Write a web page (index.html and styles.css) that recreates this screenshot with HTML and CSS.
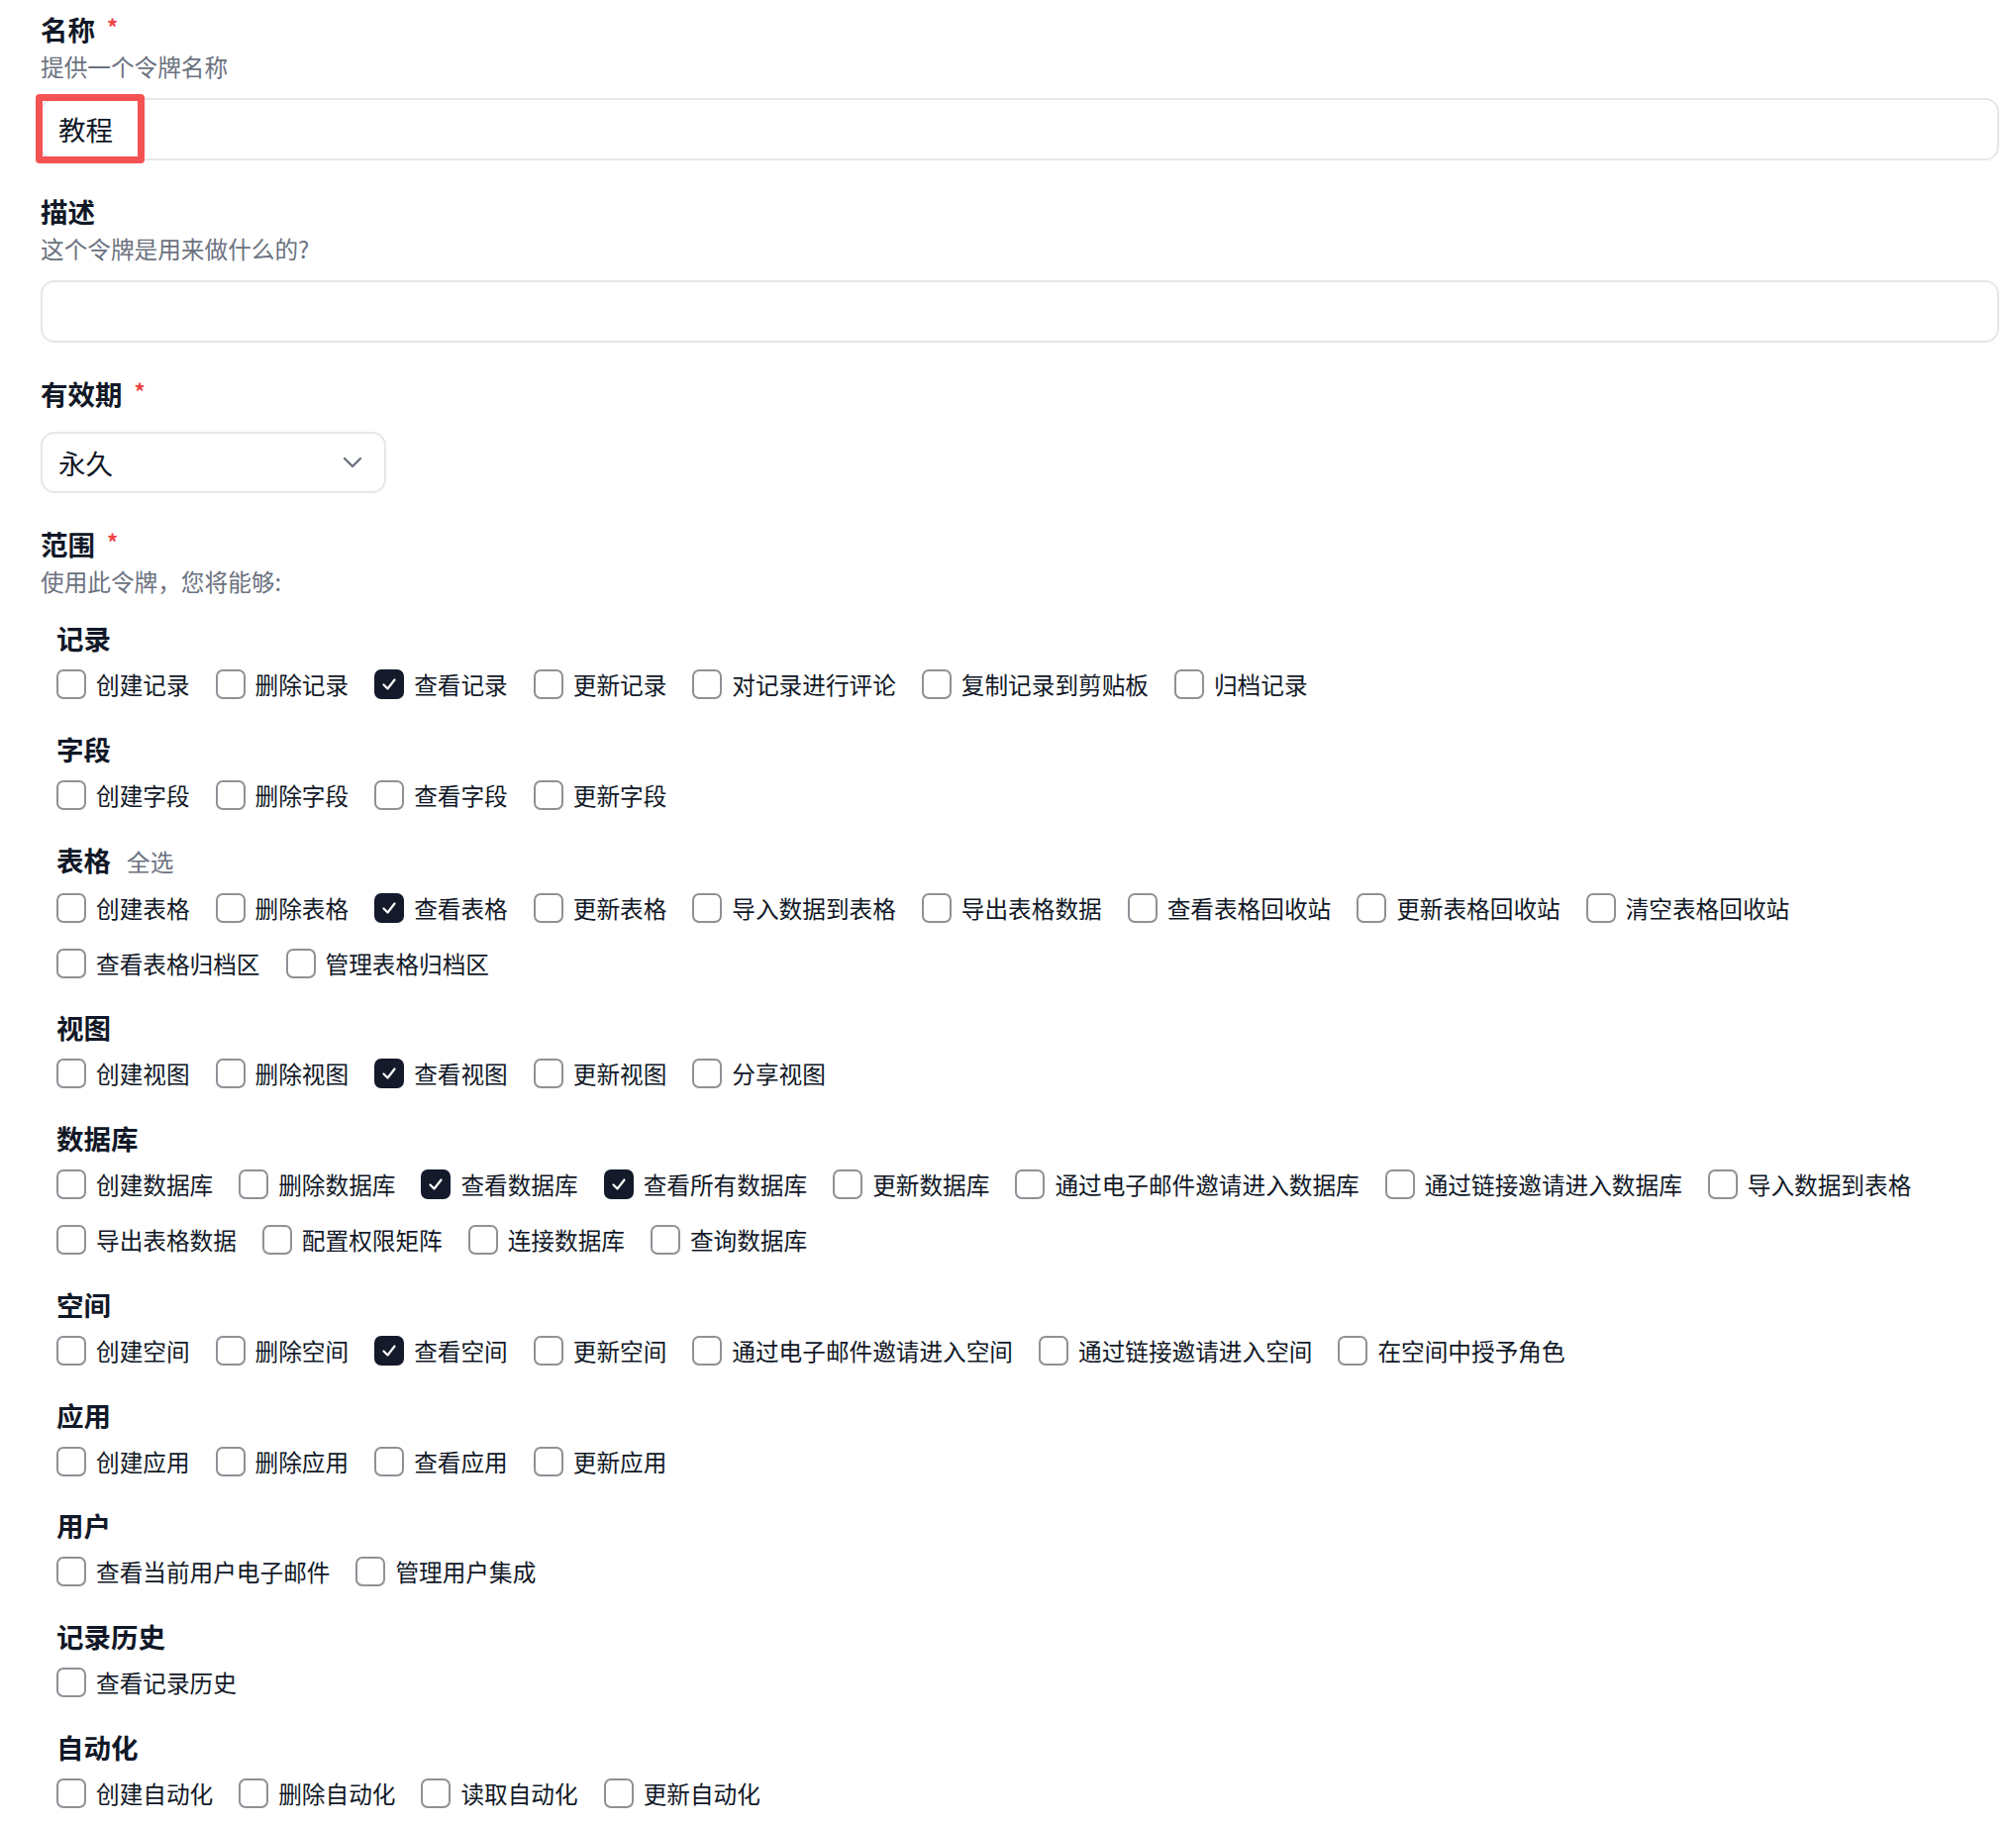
FILE: index.html
```html
<!DOCTYPE html>
<html lang="zh-CN">
<head>
<meta charset="utf-8">
<title>令牌</title>
<link rel="stylesheet" href="styles.css">
</head>
<body>
<div class="form">
  <div class="field">
    <div class="label">名称<span class="req">*</span></div>
    <div class="sub">提供一个令牌名称</div>
    <div class="input-wrap">
      <div class="input">教程</div>
      <div class="highlight"></div>
    </div>
  </div>

  <div class="field">
    <div class="label">描述</div>
    <div class="sub">这个令牌是用来做什么的?</div>
    <div class="input-wrap">
      <div class="input"></div>
    </div>
  </div>

  <div class="field">
    <div class="label">有效期<span class="req">*</span></div>
    <div class="select">
      <span>永久</span>
      <svg class="chev" width="20" height="12" viewBox="0 0 20 12"><polyline points="2,2 10,10 18,2" fill="none" stroke="#6b7280" stroke-width="2.4" stroke-linecap="round" stroke-linejoin="round"/></svg>
    </div>
  </div>

  <div class="field scopes">
    <div class="label">范围<span class="req">*</span></div>
    <div class="sub">使用此令牌，您将能够:</div>

    <div class="group">
      <div class="glabel">记录</div>
      <div class="row">
        <span class="item"><span class="cb"></span>创建记录</span>
        <span class="item"><span class="cb"></span>删除记录</span>
        <span class="item"><span class="cb on"><svg viewBox="0 0 30 30"><polyline points="9.5,15.5 13.5,19.5 20.5,10.5"/></svg></span>查看记录</span>
        <span class="item"><span class="cb"></span>更新记录</span>
        <span class="item"><span class="cb"></span>对记录进行评论</span>
        <span class="item"><span class="cb"></span>复制记录到剪贴板</span>
        <span class="item"><span class="cb"></span>归档记录</span>
      </div>
    </div>

    <div class="group">
      <div class="glabel">字段</div>
      <div class="row">
        <span class="item"><span class="cb"></span>创建字段</span>
        <span class="item"><span class="cb"></span>删除字段</span>
        <span class="item"><span class="cb"></span>查看字段</span>
        <span class="item"><span class="cb"></span>更新字段</span>
      </div>
    </div>

    <div class="group">
      <div class="glabel">表格<span class="all">全选</span></div>
      <div class="row">
        <span class="item"><span class="cb"></span>创建表格</span>
        <span class="item"><span class="cb"></span>删除表格</span>
        <span class="item"><span class="cb on"><svg viewBox="0 0 30 30"><polyline points="9.5,15.5 13.5,19.5 20.5,10.5"/></svg></span>查看表格</span>
        <span class="item"><span class="cb"></span>更新表格</span>
        <span class="item"><span class="cb"></span>导入数据到表格</span>
        <span class="item"><span class="cb"></span>导出表格数据</span>
        <span class="item"><span class="cb"></span>查看表格回收站</span>
        <span class="item"><span class="cb"></span>更新表格回收站</span>
        <span class="item"><span class="cb"></span>清空表格回收站</span>
        <span class="item"><span class="cb"></span>查看表格归档区</span>
        <span class="item"><span class="cb"></span>管理表格归档区</span>
      </div>
    </div>

    <div class="group">
      <div class="glabel">视图</div>
      <div class="row">
        <span class="item"><span class="cb"></span>创建视图</span>
        <span class="item"><span class="cb"></span>删除视图</span>
        <span class="item"><span class="cb on"><svg viewBox="0 0 30 30"><polyline points="9.5,15.5 13.5,19.5 20.5,10.5"/></svg></span>查看视图</span>
        <span class="item"><span class="cb"></span>更新视图</span>
        <span class="item"><span class="cb"></span>分享视图</span>
      </div>
    </div>

    <div class="group">
      <div class="glabel">数据库</div>
      <div class="row">
        <span class="item"><span class="cb"></span>创建数据库</span>
        <span class="item"><span class="cb"></span>删除数据库</span>
        <span class="item"><span class="cb on"><svg viewBox="0 0 30 30"><polyline points="9.5,15.5 13.5,19.5 20.5,10.5"/></svg></span>查看数据库</span>
        <span class="item"><span class="cb on"><svg viewBox="0 0 30 30"><polyline points="9.5,15.5 13.5,19.5 20.5,10.5"/></svg></span>查看所有数据库</span>
        <span class="item"><span class="cb"></span>更新数据库</span>
        <span class="item"><span class="cb"></span>通过电子邮件邀请进入数据库</span>
        <span class="item"><span class="cb"></span>通过链接邀请进入数据库</span>
        <span class="item"><span class="cb"></span>导入数据到表格</span>
        <span class="item"><span class="cb"></span>导出表格数据</span>
        <span class="item"><span class="cb"></span>配置权限矩阵</span>
        <span class="item"><span class="cb"></span>连接数据库</span>
        <span class="item"><span class="cb"></span>查询数据库</span>
      </div>
    </div>

    <div class="group">
      <div class="glabel">空间</div>
      <div class="row">
        <span class="item"><span class="cb"></span>创建空间</span>
        <span class="item"><span class="cb"></span>删除空间</span>
        <span class="item"><span class="cb on"><svg viewBox="0 0 30 30"><polyline points="9.5,15.5 13.5,19.5 20.5,10.5"/></svg></span>查看空间</span>
        <span class="item"><span class="cb"></span>更新空间</span>
        <span class="item"><span class="cb"></span>通过电子邮件邀请进入空间</span>
        <span class="item"><span class="cb"></span>通过链接邀请进入空间</span>
        <span class="item"><span class="cb"></span>在空间中授予角色</span>
      </div>
    </div>

    <div class="group">
      <div class="glabel">应用</div>
      <div class="row">
        <span class="item"><span class="cb"></span>创建应用</span>
        <span class="item"><span class="cb"></span>删除应用</span>
        <span class="item"><span class="cb"></span>查看应用</span>
        <span class="item"><span class="cb"></span>更新应用</span>
      </div>
    </div>

    <div class="group">
      <div class="glabel">用户</div>
      <div class="row">
        <span class="item"><span class="cb"></span>查看当前用户电子邮件</span>
        <span class="item"><span class="cb"></span>管理用户集成</span>
      </div>
    </div>

    <div class="group">
      <div class="glabel">记录历史</div>
      <div class="row">
        <span class="item"><span class="cb"></span>查看记录历史</span>
      </div>
    </div>

    <div class="group">
      <div class="glabel">自动化</div>
      <div class="row">
        <span class="item"><span class="cb"></span>创建自动化</span>
        <span class="item"><span class="cb"></span>删除自动化</span>
        <span class="item"><span class="cb"></span>读取自动化</span>
        <span class="item"><span class="cb"></span>更新自动化</span>
      </div>
    </div>
  </div>
</div>
</body>
</html>
```

FILE: styles.css
```css
html, body {
  margin: 0;
  padding: 0;
  background: #ffffff;
}

body {
  font-family: "Noto Sans CJK SC", "Noto Sans", "Liberation Sans", sans-serif;
  color: #111827;
}

.form {
  padding: 9px 17px 0 41px;
}

.field {
  margin-bottom: 31px;
}

.label {
  font-size: 27.5px;
  line-height: 40px;
  font-weight: 700;
  color: #111827;
}

.req {
  color: #ef4444;
  font-size: 22px;
  font-weight: 700;
  margin-left: 12px;
  vertical-align: top;
  line-height: 34px;
}

.sub {
  font-size: 23.65px;
  line-height: 37px;
  color: #6b7280;
}

.input-wrap {
  position: relative;
  margin-top: 13px;
}

.input {
  box-sizing: border-box;
  height: 63px;
  border: 2px solid #e5e7eb;
  border-radius: 14px;
  padding: 0 16px;
  font-size: 27.5px;
  line-height: 59px;
  color: #111827;
}

.highlight {
  position: absolute;
  left: -5px;
  top: -4px;
  width: 110px;
  height: 70px;
  box-sizing: border-box;
  border: 7px solid #f55353;
  border-radius: 4px;
}

.select {
  box-sizing: border-box;
  margin-top: 19px;
  width: 349px;
  height: 62px;
  border: 2px solid #e5e7eb;
  border-radius: 14px;
  padding: 0 22px 0 16px;
  display: flex;
  align-items: center;
  justify-content: space-between;
  font-size: 27.5px;
  color: #111827;
}

.chev {
  display: block;
}

.scopes .sub {
  margin-bottom: 18px;
}

.group {
  padding-left: 16px;
  margin-bottom: 28.25px;
}

.glabel {
  font-size: 27.5px;
  line-height: 40px;
  font-weight: 700;
  color: #111827;
  margin-bottom: 10.5px;
}

.all {
  font-size: 23.65px;
  font-weight: 400;
  color: #6b7280;
  margin-left: 16px;
}

.row {
  display: flex;
  flex-wrap: wrap;
  column-gap: 26px;
  row-gap: 23px;
}

.item {
  display: inline-flex;
  align-items: center;
  gap: 10px;
  height: 33px;
  font-size: 23.65px;
  color: #111827;
  white-space: nowrap;
}

.cb {
  box-sizing: border-box;
  width: 30px;
  height: 30px;
  border: 2px solid #8e9196;
  border-radius: 7px;
  flex: none;
  display: flex;
  align-items: center;
  justify-content: center;
}

.cb.on {
  background: #141a2a;
  border-color: #141a2a;
}

.cb svg {
  width: 30px;
  height: 30px;
  flex: none;
}

.cb svg polyline {
  fill: none;
  stroke: #ffffff;
  stroke-width: 2.2;
  stroke-linecap: round;
  stroke-linejoin: round;
}
```
